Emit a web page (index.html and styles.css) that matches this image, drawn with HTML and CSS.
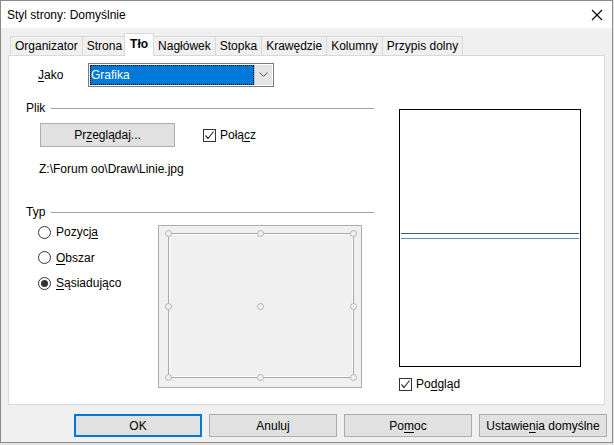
FILE: index.html
```html
<!DOCTYPE html>
<html>
<head>
    <title>Styl strony: Domyślnie</title>
    <meta charset="UTF-8">
    <link rel="stylesheet" href="styles.css">
</head>
<body>
    <div class="window">
        <div class="titlebar">
            <span class="title">Styl strony: Domyślnie</span>
            <svg class="close" width="12" height="12" viewBox="0 0 12 12">
                <path d="M1 1 L11 11 M11 1 L1 11" stroke="#000" stroke-width="1.1" fill="none"/>
            </svg>
        </div>

        <div class="tabs">
            <div class="tab">Organizator</div>
            <div class="tab">Strona</div>
            <div class="tab active">Tło</div>
            <div class="tab">Nagłówek</div>
            <div class="tab">Stopka</div>
            <div class="tab">Krawędzie</div>
            <div class="tab">Kolumny</div>
            <div class="tab">Przypis dolny</div>
        </div>

        <div class="panel">
            <div class="left">
                <div class="row-jako">
                    <label class="jako-label"><u>J</u>ako</label>
                    <div class="combo">
                        <div class="combo-value"><span>Grafika</span></div>
                        <div class="combo-arrow">
                            <svg width="9" height="6" viewBox="0 0 9 6">
                                <path d="M0.5 0.5 L4.5 4.5 L8.5 0.5" stroke="#555" fill="none"/>
                            </svg>
                        </div>
                    </div>
                </div>

                <div class="heading plik"><span>Plik</span><span class="rule"></span></div>

                <div class="row-file">
                    <button class="btn browse">Pr<u>z</u>eglądaj...</button>
                    <label class="check">
                        <span class="box">
                            <svg width="11" height="11" viewBox="0 0 11 11">
                                <path d="M1.5 5.5 L4 8.5 L9.5 1.5" stroke="#333" stroke-width="1.2" fill="none"/>
                            </svg>
                        </span>
                        <span>Połą<u>c</u>z</span>
                    </label>
                </div>

                <div class="path">Z:\Forum oo\Draw\Linie.jpg</div>

                <div class="heading typ"><span>Typ</span><span class="rule"></span></div>

                <div class="typ-body">
                    <div class="radios">
                        <label class="radio"><span class="dot"></span><span>Pozycj<u>a</u></span></label>
                        <label class="radio"><span class="dot"></span><span><u>O</u>bszar</span></label>
                        <label class="radio on"><span class="dot"></span><span><u>S</u>ąsiadująco</span></label>
                    </div>
                    <div class="position-box">
                        <svg width="202" height="161" viewBox="0 0 202 161">
                            <rect x="9.5" y="7.5" width="185" height="144" fill="none" stroke="#a8a8a8"/>
                            <rect x="10.5" y="8.5" width="183" height="142" fill="none" stroke="#fff"/>
                            <g fill="#f0f0f0" stroke="#b4b4b4">
                                <circle cx="9.5" cy="7.5" r="3"/>
                                <circle cx="101.5" cy="7.5" r="3"/>
                                <circle cx="194.5" cy="7.5" r="3"/>
                                <circle cx="9.5" cy="80.5" r="3"/>
                                <circle cx="101.5" cy="80.5" r="3"/>
                                <circle cx="194.5" cy="80.5" r="3"/>
                                <circle cx="9.5" cy="151.5" r="3"/>
                                <circle cx="101.5" cy="151.5" r="3"/>
                                <circle cx="194.5" cy="151.5" r="3"/>
                            </g>
                        </svg>
                    </div>
                </div>
            </div>

            <div class="right">
                <div class="preview">
                    <div class="pline dark"></div>
                    <div class="pline light"></div>
                </div>
                <label class="check podglad">
                    <span class="box">
                        <svg width="11" height="11" viewBox="0 0 11 11">
                            <path d="M1.5 5.5 L4 8.5 L9.5 1.5" stroke="#333" stroke-width="1.2" fill="none"/>
                        </svg>
                    </span>
                    <span>Po<u>d</u>gląd</span>
                </label>
            </div>
        </div>

        <div class="buttons">
            <button class="btn ok">OK</button>
            <button class="btn">Anuluj</button>
            <button class="btn">Po<u>m</u>oc</button>
            <button class="btn">Ustawie<u>n</u>ia domyślne</button>
        </div>
    </div>
</body>
</html>
```

FILE: styles.css
```css
body {
    margin: 0;
    background: #e4e4e4;
    font-family: "Liberation Sans", Arial, sans-serif;
    font-size: 12px;
    color: #000;
}
u {
    text-decoration-thickness: 1px;
    text-underline-offset: 2px;
}
.window {
    width: 611px;
    height: 441px;
    border: 1px solid #8c8c8c;
    background: #f0f0f0;
}
.titlebar {
    height: 27px;
    background: #fff;
    display: flex;
    align-items: center;
    justify-content: space-between;
    padding: 0 9px 0 6px;
}
.tabs {
    display: flex;
    align-items: flex-end;
    margin: 5px 0 0 9px;
    height: 22px;
}
.tab {
    height: 18px;
    line-height: 18px;
    padding: 0 4px;
    border: 1px solid #d9d9d9;
    border-bottom: none;
    margin-right: -1px;
    background: #f0f0f0;
}
.tab.active {
    position: relative;
    height: 22px;
    line-height: 20px;
    background: #fff;
    font-weight: bold;
    margin: 0 -1px -1px -2px;
    padding: 0 5px;
    z-index: 1;
}
.panel {
    width: 578px;
    height: 341px;
    margin-left: 7px;
    border: 1px solid #d9d9d9;
    background: #fff;
    padding: 7px 0 0 17px;
    display: flex;
}
.left {
    width: 348px;
}
.row-jako {
    display: flex;
    align-items: center;
    padding-left: 12px;
    height: 24px;
}
.jako-label {
    width: 50px;
}
.combo {
    width: 186px;
    height: 24px;
    box-sizing: border-box;
    border: 1px solid #7a7a7a;
    padding: 1px;
    display: flex;
    background: #fff;
}
.combo-value {
    flex: 1;
    background: #0078d7;
    color: #fff;
    outline: 1px dotted #000;
    outline-offset: -1px;
    display: flex;
    align-items: center;
    padding-left: 1px;
}
.combo-arrow {
    width: 17px;
    background: #e5e5e5;
    border-left: 1px solid #c0c0c0;
    display: flex;
    align-items: center;
    justify-content: center;
}
.heading {
    display: flex;
    align-items: center;
    height: 16px;
}
.heading .rule {
    flex: 1;
    height: 1px;
    background: #a0a0a0;
    margin-left: 6px;
}
.plik {
    margin-top: 13px;
}
.typ {
    margin-top: 27px;
}
.row-file {
    display: flex;
    align-items: center;
    margin-top: 7px;
    padding-left: 14px;
}
.btn {
    font-family: inherit;
    font-size: 12px;
    background: #e1e1e1;
    border: 1px solid #adadad;
    color: #000;
    padding: 0;
    height: 23px;
}
.browse {
    width: 135px;
    height: 24px;
}
.check {
    display: flex;
    align-items: center;
    gap: 4px;
}
.row-file .check {
    margin-left: 28px;
}
.box {
    width: 13px;
    height: 13px;
    box-sizing: border-box;
    border: 1px solid #333;
    background: #fff;
    display: flex;
    align-items: center;
    justify-content: center;
}
.path {
    margin-top: 14px;
    padding-left: 13px;
    line-height: 16px;
}
.typ-body {
    display: flex;
    margin-top: 5px;
}
.radios {
    width: 120px;
    padding-left: 12px;
    display: flex;
    flex-direction: column;
    gap: 11.5px;
}
.radio {
    display: flex;
    align-items: center;
    gap: 5px;
    height: 14px;
}
.dot {
    width: 13px;
    height: 13px;
    box-sizing: border-box;
    border: 1px solid #333;
    border-radius: 50%;
    background: #fff;
    display: flex;
    align-items: center;
    justify-content: center;
}
.radio.on .dot::after {
    content: "";
    width: 7px;
    height: 7px;
    border-radius: 50%;
    background: #333;
}
.position-box {
    width: 204px;
    height: 163px;
    box-sizing: border-box;
    border: 1px solid #adadad;
    background: #f0f0f0;
}
.position-box svg {
    display: block;
}
.right {
    margin-left: 25px;
    width: 182px;
}
.preview {
    margin-top: 46px;
    width: 182px;
    height: 258px;
    box-sizing: border-box;
    border: 1px solid #000;
    padding: 123px 1px 0;
}
.pline {
    height: 1px;
}
.pline.dark {
    background: #3b5c99;
}
.pline.light {
    margin-top: 4px;
    background: #5a8fd0;
}
.podglad {
    margin-top: 10px;
}
.buttons {
    display: flex;
    justify-content: flex-end;
    gap: 7px;
    margin-top: 9px;
    padding-right: 5px;
}
.buttons .btn {
    width: 128px;
}
.buttons .ok {
    border: 2px solid #0078d7;
}
```
